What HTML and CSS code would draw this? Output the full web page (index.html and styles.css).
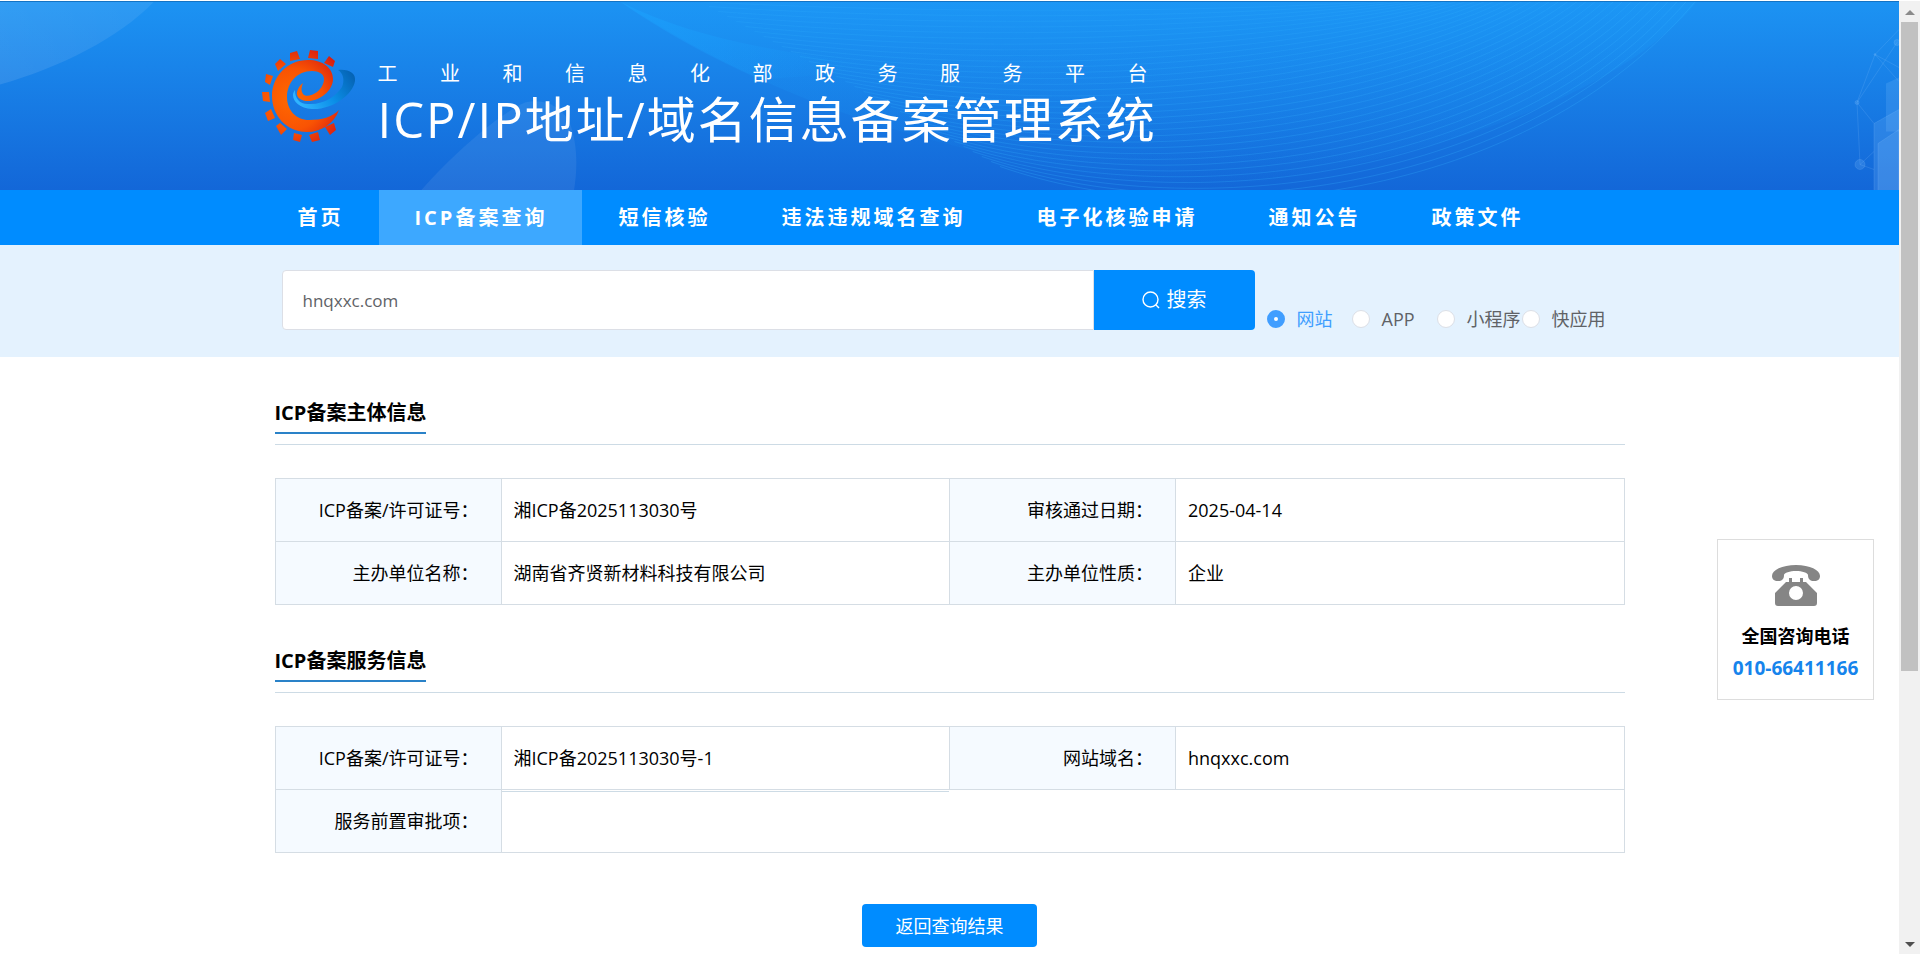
FILE: index.html
```html
<!DOCTYPE html>
<html lang="zh-CN">
<head>
<meta charset="utf-8">
<title>ICP/IP地址/域名信息备案管理系统</title>
<link rel="stylesheet" href="styles.css">
</head>
<body>
<div class="page">
  <header class="banner">
    <svg class="banner-art" viewBox="0 0 1899 189" preserveAspectRatio="xMidYMid slice" aria-hidden="true">
      <defs>
        <linearGradient id="fadeLeft" x1="0" y1="0" x2="1" y2="0">
          <stop offset="0" stop-color="#fff" stop-opacity="0.1"/>
          <stop offset="1" stop-color="#fff" stop-opacity="0.07"/>
        </linearGradient>
        <linearGradient id="glow" x1="0" y1="0" x2="0" y2="1">
          <stop offset="0" stop-color="#1b9ffb" stop-opacity="0.3"/>
          <stop offset="1" stop-color="#1b9ffb" stop-opacity="0"/>
        </linearGradient>
        <linearGradient id="ribbon" x1="0" y1="0" x2="1" y2="0.3">
          <stop offset="0" stop-color="#1ba4ff" stop-opacity="0.5"/>
          <stop offset="1" stop-color="#1ba4ff" stop-opacity="0"/>
        </linearGradient>
      </defs>
      <path fill="url(#fadeLeft)" d="M0 0H154C120 36 60 66 0 83Z"/>
      <path fill="#fff" fill-opacity="0.07" d="M421 189C455 150 500 112 525 101C548 96 566 108 572 128C578 150 577 170 574 189Z"/>
      <path fill="url(#glow)" d="M620 0C760 90 900 150 1200 189C1500 150 1640 70 1697 0Z"/>
      <path fill="url(#ribbon)" d="M620 0C690 36 780 52 900 66C840 72 790 76 760 78C710 56 660 28 620 0Z"/>
      <g id="waves" fill="none" stroke="#35b4ff" stroke-width="1"></g>
      <g fill="#8cc6ff" fill-opacity="0.18" stroke="#9fd0ff" stroke-opacity="0.15" stroke-width="1">
        <path fill="none" d="M1899 28L1875 53L1899 66M1875 53L1899 80M1875 53L1857 101L1897 41M1857 101L1860 163M1857 101L1874 122M1860 163L1874 150M1860 163L1874 168"/>
        <circle cx="1897" cy="41" r="3"/>
        <circle cx="1875" cy="53" r="1"/>
        <circle cx="1857" cy="101" r="2"/>
        <circle cx="1860" cy="163" r="5"/>
        <path stroke="none" d="M1886 130V82L1899 76V130Z"/>
        <path d="M1874 189V122L1899 108V189Z"/>
        <path d="M1878 189V142L1899 128V189Z"/>
      </g>
    </svg>
    <div class="banner-inner">
      <svg class="logo" viewBox="0 0 96 96" role="img" aria-label="网站标志">
        <defs>
          <radialGradient id="orange" gradientUnits="userSpaceOnUse" cx="30" cy="50" r="56">
            <stop offset="0" stop-color="#ff6a00"/>
            <stop offset="0.55" stop-color="#f95303"/>
            <stop offset="1" stop-color="#d91e10"/>
          </radialGradient>
          <linearGradient id="swoosh" x1="0" y1="0.6" x2="1" y2="0.2">
            <stop offset="0" stop-color="#2fb4ff"/>
            <stop offset="0.5" stop-color="#0b8fe8"/>
            <stop offset="1" stop-color="#0563b4"/>
          </linearGradient>
        </defs>
        <g fill="url(#orange)">
          <path d="M28 4L35 2L38 10L28 12Z"/>
          <path d="M48 1L56 2L56 10L46 9Z"/>
          <path d="M67 7L73 12L71 18L62 14Z"/>
          <path d="M13 15L18 10L24 15L16 22Z"/>
          <path d="M4 25L11 27L8 36L3 33Z"/>
          <path d="M0 43L7 43L8 53L1 52Z"/>
          <path d="M3 64L9 60L13 69L6 72Z"/>
          <path d="M14 77L18 74L25 80L19 86Z"/>
          <path d="M32 84L40 86L38 93L31 91Z"/>
          <path d="M47 86L56 83L58 91L50 93Z"/>
          <path d="M63 78L72 74L74 81L68 86Z"/>
        </g>
        <path fill="url(#swoosh)" d="M76 21C87 20 94 24 93 32C91 46 70 61 50 60C38 59 31 53 31 46C31 44 32 42 33 41C33 49 37 55 46 55C62 56 74 47 80 38C83 31 81 24 76 21Z"/>
        <path fill="url(#orange)" d="M77 61C72 75 59 83 45 83C24 83 10 66 10 47C10 27 26 11 46 11C61 11 71 19 71 30C71 42 57 53 44 52C37 51 34 47 35 43C36 39 38 36 41 34C39 39 39 42 41 45C43 48 50 47 55 43C60 39 62 34 62 30C62 25 57 22 50 22C35 22 25 34 25 48C25 61 34 71 47 71C60 71 70 68 77 61Z"/>
      </svg>
      <div class="brand">
        <p class="brand-sub">工业和信息化部政务服务平台</p>
        <h1 class="brand-title">ICP/IP地址/域名信息备案管理系统</h1>
      </div>
    </div>
  </header>

  <nav class="nav" aria-label="主导航">
    <ul class="nav-list">
      <li><a class="nav-link" href="#">首页</a></li>
      <li><a class="nav-link nav-link-active" href="#" aria-current="page">ICP备案查询</a></li>
      <li><a class="nav-link" href="#">短信核验</a></li>
      <li><a class="nav-link" href="#">违法违规域名查询</a></li>
      <li><a class="nav-link" href="#">电子化核验申请</a></li>
      <li><a class="nav-link" href="#">通知公告</a></li>
      <li><a class="nav-link" href="#">政策文件</a></li>
    </ul>
  </nav>

  <section class="search">
    <form class="search-form">
      <input class="search-input" type="text" value="hnqxxc.com" aria-label="查询内容">
      <button class="search-button" type="button">
        <svg class="search-icon" viewBox="0 0 18 18" aria-hidden="true"><circle cx="8.500" cy="8.500" r="7.500"/><path d="M13.800 13.800L17 17"/></svg>
        搜索
      </button>
      <div class="types" role="radiogroup" aria-label="查询类型">
        <label class="type"><input class="type-radio" type="radio" name="type" checked><span class="type-text">网站</span></label>
        <label class="type"><input class="type-radio" type="radio" name="type"><span class="type-text">APP</span></label>
        <label class="type"><input class="type-radio" type="radio" name="type"><span class="type-text">小程序</span></label>
        <label class="type"><input class="type-radio" type="radio" name="type"><span class="type-text">快应用</span></label>
      </div>
    </form>
  </section>

  <main class="content">
    <section class="block">
      <div class="block-head"><h2 class="block-title">ICP备案主体信息</h2></div>
      <table class="info">
        <colgroup><col class="col-label"><col class="col-value"><col class="col-label"><col class="col-value"></colgroup>
        <tr><th scope="row">ICP备案/许可证号：</th><td>湘ICP备2025113030号</td><th scope="row">审核通过日期：</th><td>2025-04-14</td></tr>
        <tr><th scope="row">主办单位名称：</th><td>湖南省齐贤新材料科技有限公司</td><th scope="row">主办单位性质：</th><td>企业</td></tr>
      </table>
    </section>
    <section class="block">
      <div class="block-head"><h2 class="block-title">ICP备案服务信息</h2></div>
      <table class="info">
        <colgroup><col class="col-label"><col class="col-value"><col class="col-label"><col class="col-value"></colgroup>
        <tr><th scope="row">ICP备案/许可证号：</th><td class="double-line">湘ICP备2025113030号-1</td><th scope="row">网站域名：</th><td>hnqxxc.com</td></tr>
        <tr><th scope="row">服务前置审批项：</th><td colspan="3"></td></tr>
      </table>
    </section>
    <button class="back-button" type="button">返回查询结果</button>
  </main>
</div>

<aside class="hotline">
  <svg class="hotline-icon" viewBox="0 0 48 42" aria-hidden="true">
    <path d="M24 0C38 0 48 5 48 11C48 14 46 16 42 16C38 16 36 14 36 10C36 8 30 6 24 6S12 8 12 10C12 14 10 16 6 16C2 16 0 14 0 11C0 5 10 0 24 0Z"/>
    <path fill-rule="evenodd" d="M17 13H20V17H28V13H31V17H34L45 28V38Q45 41 42 41H6Q3 41 3 38V28L14 17H17ZM24 21A7 7 0 1 0 24 35A7 7 0 1 0 24 21Z"/>
  </svg>
  <span class="hotline-name">全国咨询电话</span>
  <span class="hotline-number">010-66411166</span>
</aside>

<div class="scrollbar" aria-hidden="true">
  <span class="arrow arrow-up"></span>
  <span class="thumb"></span>
  <span class="arrow arrow-down"></span>
</div>
<script src="waves.js"></script>
</body>
</html>
```
FILE: waves.js
```js
// Fills the banner with wave lines that fan out from the left edge of the glow.
const group = document.getElementById("waves");
const count = 34;
for (let i = 0; i < count; i++) {
  const k = 1 - i / (count - 1);
  const right = 1697 - i * 9;
  const left = 700 + k * 300;
  const top = k * 165;
  const path = document.createElementNS("http://www.w3.org/2000/svg", "path");
  path.setAttribute("d", `M${left} ${top}C${left + 200} ${top + 12 + k * 58} ${right - 170} ${12 + k * 190} ${right} -2`);
  path.setAttribute("stroke-opacity", (0.16 + k * 0.1).toFixed(3));
  group.appendChild(path);
}
```
FILE: styles.css
```css
* {
  box-sizing: border-box;
}

body {
  margin: 0;
  display: flex;
  height: 100vh;
  overflow: hidden;
  background: #fff;
  color: #000;
  font-family: "Open Sans", "Noto Sans CJK SC", sans-serif;
  font-size: 18px;
  line-height: 24px;
}

h1, h2, p, ul {
  margin: 0;
  padding: 0;
}

input, button {
  font: inherit;
}

.page {
  flex: 1;
  min-width: 0;
  height: 100vh;
  overflow: hidden;
}

/* Banner */

.banner {
  position: relative;
  margin-top: 1px;
  border-top: 1px solid #1473c4;
  background: linear-gradient(#1c93f3, #1367d8);
}

.banner-art {
  position: absolute;
  inset: 0;
  width: 100%;
  height: 100%;
}

.banner-inner {
  position: relative;
  display: flex;
  gap: 20px;
  max-width: 1376px;
  margin: 0 auto;
  padding: 47px 0 39px;
}

.logo {
  width: 96px;
  height: 96px;
}

.brand {
  display: grid;
  align-content: start;
  gap: 1px;
  padding-top: 13px;
  color: #fff;
}

.brand-sub {
  width: 770px;
  font-size: 20px;
  line-height: 24px;
  text-align-last: justify;
}

.brand-title {
  font-size: 49px;
  font-weight: 400;
  line-height: 64px;
  letter-spacing: 2px;
  white-space: nowrap;
}

/* Navigation */

.nav {
  background: #008cff;
}

.nav-list {
  display: flex;
  max-width: 1376px;
  margin: 0 auto;
  list-style: none;
}

.nav-link {
  display: block;
  padding: 0 35px 0 36px;
  color: #fff;
  font-size: 20px;
  font-weight: 700;
  line-height: 55px;
  letter-spacing: 3px;
  text-decoration: none;
  white-space: nowrap;
}

.nav-link-active {
  background: #3da8ff;
}

/* Search */

.search {
  background: #e4f2fe;
}

.search-form {
  display: flex;
  align-items: flex-end;
  max-width: 1376px;
  margin: 0 auto;
  padding: 25px 31px 27px 20px;
}

.search-input {
  flex: 1;
  min-width: 0;
  height: 60px;
  padding: 0 20px;
  border: 1px solid #dcdfe6;
  border-radius: 4px 0 0 4px;
  background: #fff;
  color: #606266;
  font-size: 17px;
}

.search-button {
  display: flex;
  align-items: center;
  justify-content: center;
  gap: 7px;
  width: 161px;
  height: 60px;
  border: 0;
  border-radius: 0 4px 4px 0;
  background: #008cff;
  color: #fff;
  font-size: 20px;
}

.search-icon {
  width: 18px;
  height: 18px;
  fill: none;
  stroke: #fff;
  stroke-width: 1.4;
}

.types {
  display: flex;
  padding-left: 12px;
}

.type {
  display: flex;
  align-items: center;
  gap: 12px;
  width: 85px;
  color: #606266;
  line-height: 22px;
  white-space: nowrap;
}

.type-radio {
  appearance: none;
  flex: none;
  width: 18px;
  height: 18px;
  margin: 0;
  border: 1px solid #dcdfe6;
  border-radius: 50%;
  background: #fff;
}

.type-radio:checked {
  border: 7px solid #409eff;
}

.type-radio:checked + .type-text {
  color: #409eff;
}

/* Record details */

.content {
  max-width: 1350px;
  margin: 0 auto;
}

.block {
  padding-top: 43px;
}

.block-head {
  padding-bottom: 10px;
  border-bottom: 1px solid #cddbe5;
}

.block-title {
  width: max-content;
  padding-bottom: 6px;
  border-bottom: 2px solid #2a82c8;
  font-size: 20px;
  font-weight: 700;
  line-height: 26px;
}

.info {
  width: 100%;
  margin-top: 33px;
  border-collapse: collapse;
  table-layout: fixed;
}

.col-label {
  width: 226px;
}

.info th,
.info td {
  height: 63px;
  padding: 0 12px;
  border: 1px solid #d5dde4;
  font-weight: 400;
  text-align: left;
}

.info th {
  padding-right: 22px;
  background: #f5faff;
  text-align: right;
  white-space: nowrap;
}

.info .double-line {
  position: relative;
}

.double-line::after {
  content: "";
  position: absolute;
  left: 0;
  right: 0;
  bottom: -3px;
  height: 1px;
  background: #cddbe5;
}

.back-button {
  display: block;
  width: 175px;
  height: 43px;
  margin: 51px auto 0;
  border: 0;
  border-radius: 4px;
  background: #008cff;
  color: #fff;
}

/* Hotline card */

.hotline {
  position: fixed;
  right: 46px;
  top: 539px;
  display: flex;
  flex-direction: column;
  align-items: center;
  width: 157px;
  padding: 25px 0 15px;
  border: 1px solid #ddd;
  background: #fff;
  font-weight: 700;
  line-height: 32px;
}

.hotline-icon {
  width: 48px;
  height: 42px;
  margin-bottom: 13px;
  fill: #858585;
}

.hotline-number {
  color: #1684ec;
  font-size: 19px;
}

/* Scrollbar */

.scrollbar {
  display: flex;
  flex-direction: column;
  align-items: center;
  width: 21px;
  margin-top: 1px;
  padding: 9px 0 7px;
  background: #f1f1f1;
}

.thumb {
  width: 17px;
  height: 68vh;
  margin-top: 7px;
  background: #c1c1c1;
}

.arrow {
  border: 5px solid transparent;
}

.arrow-up {
  border-top: 0;
  border-bottom-color: #8b8b8b;
}

.arrow-down {
  margin-top: auto;
  border-bottom: 0;
  border-top-color: #505050;
}
```
